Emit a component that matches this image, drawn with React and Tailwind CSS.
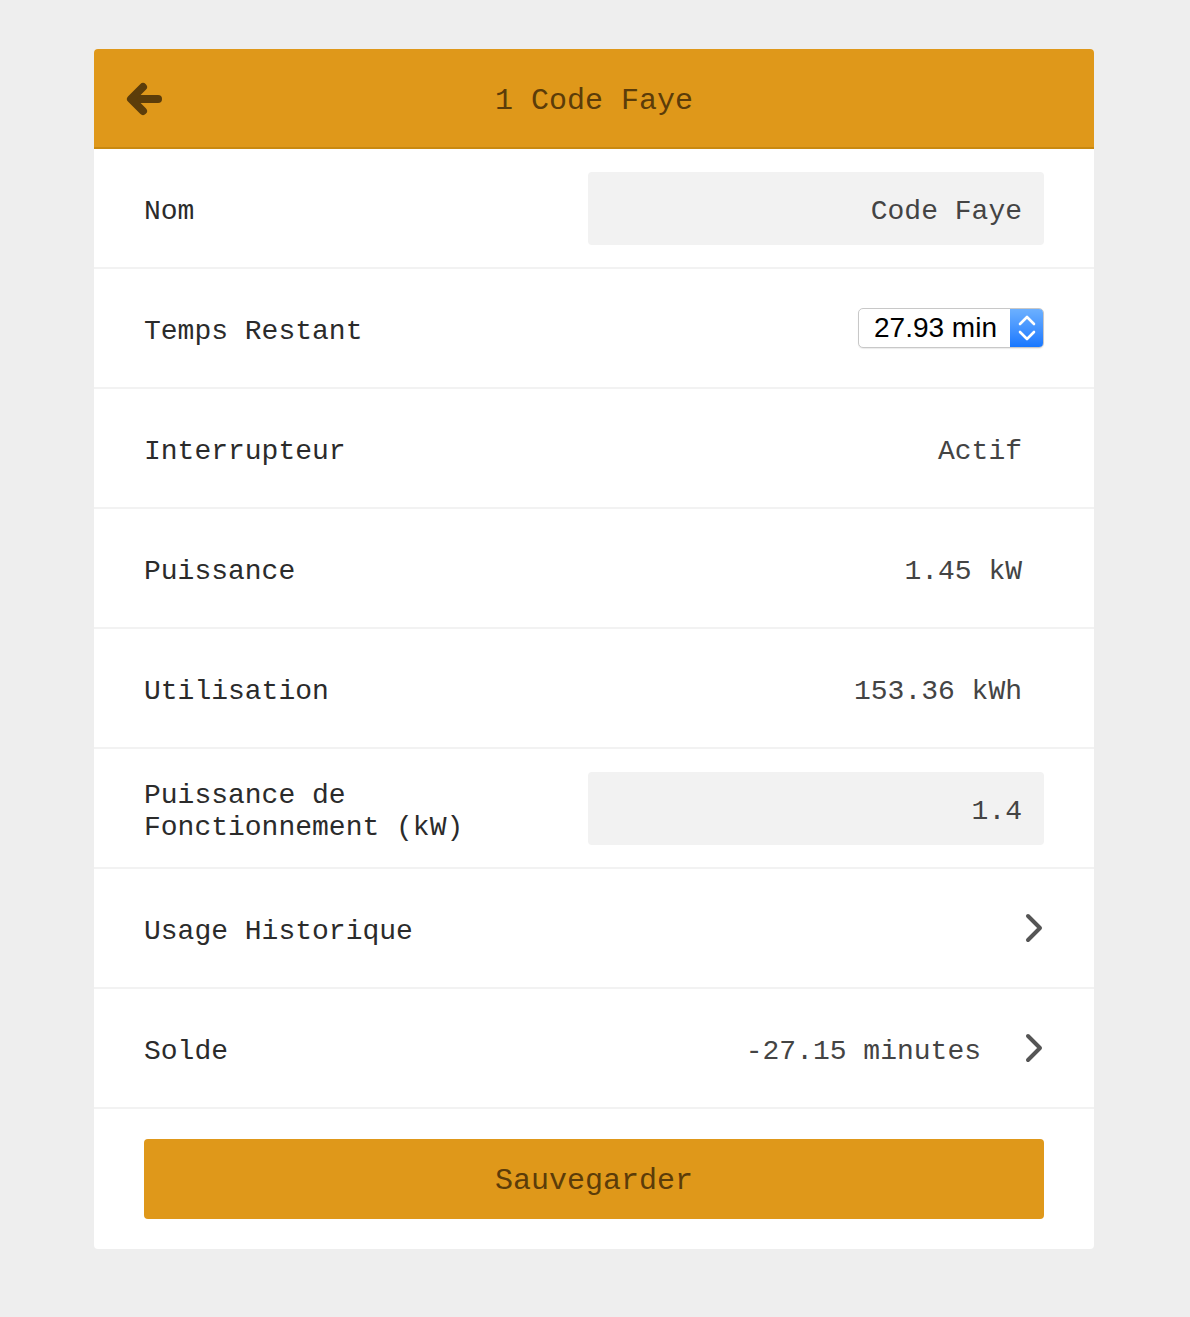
import React from "react";

const mono = { fontFamily: '"Liberation Mono", "Courier New", monospace' };

function Chevron() {
  return (
    <svg width="20" height="30" viewBox="0 0 20 30" className="shrink-0">
      <polyline
        points="4,3 16,15 4,27"
        fill="none"
        stroke="#555"
        strokeWidth="4"
        strokeLinecap="round"
        strokeLinejoin="round"
      />
    </svg>
  );
}

function Row({ label, children }) {
  return (
    <div className="flex items-center h-[120px] px-[50px] border-b-2 border-[#f2f2f2]">
      <div className="w-[444px] shrink-0 text-[#2b2b2b] leading-[32px] pt-[8px]">{label}</div>
      <div className="flex-1 flex items-center justify-end text-[#444]">{children}</div>
    </div>
  );
}

function Stepper() {
  return (
    <div className="flex items-stretch h-[40px] w-[186px] rounded-[5px] border border-[#c8c8c8] bg-white overflow-hidden shadow-[0_1px_1px_rgba(0,0,0,0.08)]">
      <div
        className="flex-1 flex items-center pl-[15px] text-[28px] text-black"
        style={{ fontFamily: '"Liberation Sans", Arial, sans-serif' }}
      >
        27.93 min
      </div>
      <div className="w-[33px] flex items-center justify-center bg-gradient-to-b from-[#6cb0ff] to-[#1677ff]">
        <svg width="20" height="30" viewBox="0 0 20 30">
          <polyline points="3,11 10,4 17,11" fill="none" stroke="#fff" strokeWidth="2.6" strokeLinecap="round" strokeLinejoin="round" />
          <polyline points="3,19 10,26 17,19" fill="none" stroke="#fff" strokeWidth="2.6" strokeLinecap="round" strokeLinejoin="round" />
        </svg>
      </div>
    </div>
  );
}

function Field({ children }) {
  return (
    <div className="w-[456px] h-[73px] rounded-[4px] bg-[#f2f2f2] flex items-center justify-end pr-[22px] pt-[8px] text-[#444]">
      {children}
    </div>
  );
}

export default function App() {
  return (
    <div className="min-h-screen bg-[#eeeeee] pt-[49px] pb-[68px]" style={mono}>
      <div className="w-[1000px] ml-[94px] bg-white rounded-[4px] overflow-hidden text-[28px]">
        {/* header */}
        <div className="relative h-[100px] bg-[#df981a] border-b-2 border-[#c98910] flex items-center justify-center">
          <button className="absolute left-[31px] top-[33px]">
            <svg width="38" height="36" viewBox="0 0 38 36">
              <line x1="33" y1="17" x2="8" y2="17" stroke="#5c3d0a" strokeWidth="8" strokeLinecap="round" />
              <polyline points="18,5 6,17 18,29" fill="none" stroke="#5c3d0a" strokeWidth="8" strokeLinecap="round" strokeLinejoin="round" />
            </svg>
          </button>
          <h1 className="text-[30px] text-[#5b3c09] pt-[6px]">1 Code Faye</h1>
        </div>

        <Row label="Nom">
          <Field>Code Faye</Field>
        </Row>
        <Row label="Temps Restant">
          <Stepper />
        </Row>
        <Row label="Interrupteur">
          <span className="pr-[22px] pt-[8px]">Actif</span>
        </Row>
        <Row label="Puissance">
          <span className="pr-[22px] pt-[8px]">1.45 kW</span>
        </Row>
        <Row label="Utilisation">
          <span className="pr-[22px] pt-[8px]">153.36 kWh</span>
        </Row>
        <Row label="Puissance de Fonctionnement (kW)">
          <Field>1.4</Field>
        </Row>
        <Row label="Usage Historique">
          <Chevron />
        </Row>
        <Row label="Solde">
          <span className="mr-[43px] pt-[8px]">-27.15 minutes</span>
          <Chevron />
        </Row>

        <div className="px-[50px] py-[30px]">
          <button className="w-full h-[80px] rounded-[4px] bg-[#df981a] text-[#5b3c09] text-[30px] pt-[4px]" style={mono}>
            Sauvegarder
          </button>
        </div>
      </div>
    </div>
  );
}
